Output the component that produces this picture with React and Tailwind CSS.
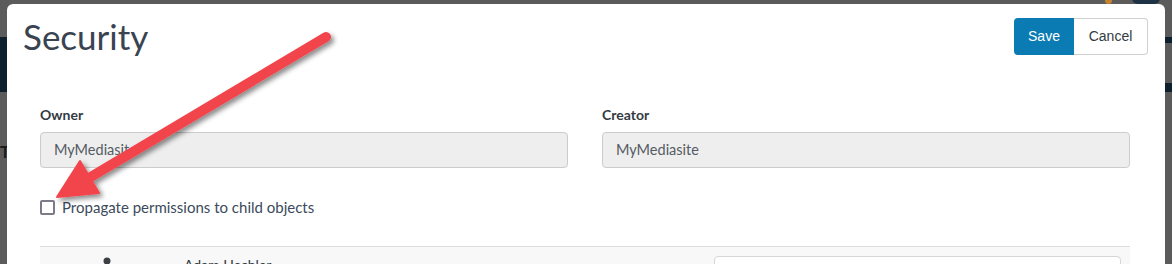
import React from "react";

const font = { fontFamily: "Lato, 'Open Sans', sans-serif" };

const Arrow = () => (
  <svg
    className="pointer-events-none absolute left-0 top-0"
    width="1172"
    height="264"
    viewBox="0 0 1172 264"
  >
    <defs>
      <filter id="arrowShadow" x="-20%" y="-20%" width="140%" height="140%">
        <feDropShadow dx="3" dy="3" stdDeviation="2.5" floodColor="#000" floodOpacity="0.45" />
      </filter>
    </defs>
    <g filter="url(#arrowShadow)" fill="#f2454c" stroke="#f2454c">
      <line x1="326" y1="37" x2="84" y2="181" strokeWidth="10" strokeLinecap="round" />
      <polygon points="57,197 99,193 80,161" strokeWidth="2" strokeLinejoin="round" />
    </g>
  </svg>
);

const Field = ({ label, value }) => (
  <div className="flex flex-col">
    <label className="h-[20px] text-[14px] font-bold leading-[20px] text-[#333a42]">{label}</label>
    <div className="mt-[7px] flex h-[36px] items-center rounded-[4px] border border-[#cccccc] bg-[#eeeeee] px-[13px] text-[14.5px] text-[#555b63]">
      {value}
    </div>
  </div>
);

export default function App() {
  return (
    <div className="relative h-[264px] w-[1172px] overflow-hidden bg-[#5b5b5b]" style={font}>
      {/* page behind the overlay */}
      <div className="absolute left-0 top-[37px] h-[55px] w-[8px] bg-[#0e1f2d]" />
      <div className="absolute left-0 top-[143px] text-[17px] font-bold leading-none text-[#1b1b1b]">T</div>
      <div className="absolute right-0 top-[37px] h-[6px] w-[8px] bg-[#0e1f2d]" />
      <div className="absolute right-0 top-[83px] h-[9px] w-[8px] bg-[#0e1f2d]" />
      <div className="absolute left-[1105px] top-[-3px] h-[7px] w-[7px] rounded-full bg-[#c7822c]" />
      <div className="absolute left-[1132px] top-[-6px] h-[10px] w-[28px] rounded-b-[6px] border-x-[4px] border-b-[4px] border-[#1d3345]" />

      <div className="relative mx-[7px] mt-[4px] h-[300px] rounded-t-[6px] bg-white">
        {/* header */}
        <div className="flex items-start justify-between pl-[16px] pr-[17px]">
          <h1 className="pt-[12px] text-[35px] font-normal leading-[40px] text-[#3a4350]">Security</h1>
          <div className="mt-[14px] flex" style={{ fontFamily: "'Liberation Sans', Arial, sans-serif" }}>
            <button className="h-[37px] w-[60px] rounded-l-[4px] bg-[#0a7bb3] text-[14px] text-white">Save</button>
            <button className="h-[37px] w-[74px] rounded-r-[4px] border border-l-0 border-[#d0d0d0] bg-white text-[14px] text-[#333a42]">
              Cancel
            </button>
          </div>
        </div>

        {/* body */}
        <div className="pl-[33px] pr-[35px] pt-[49px]">
          <div className="grid grid-cols-2 gap-[34px]">
            <Field label="Owner" value="MyMediasite" />
            <Field label="Creator" value="MyMediasite" />
          </div>

          <div className="mt-[30px] flex items-center">
            <span className="h-[15px] w-[15px] rounded-[2px] border-[2px] border-[#7c7c88] bg-white" />
            <span className="ml-[7px] text-[15px] leading-[18px] text-[#3c4a5b]">Propagate permissions to child objects</span>
          </div>

          <div className="mt-[30px] h-[40px] border-t border-[#dddddd] bg-[#f8f8f8]">
            <div className="flex items-start">
              <svg className="ml-[62px] mt-[9px]" width="10" height="24" viewBox="0 0 10 24">
                <circle cx="5" cy="5" r="3.5" fill="#3b3f45" />
                <rect x="2" y="9" width="6" height="14" rx="2" fill="#3b3f45" />
              </svg>
              <span className="ml-[72px] mt-[9px] text-[14px] leading-[18px] text-[#333a42]">Adam Hechler</span>
              <div className="ml-auto mr-[9px] mt-[9px] h-[30px] w-[407px] rounded-[4px] border border-[#d6d6d6] bg-white" />
            </div>
          </div>
        </div>
      </div>

      <Arrow />
    </div>
  );
}
